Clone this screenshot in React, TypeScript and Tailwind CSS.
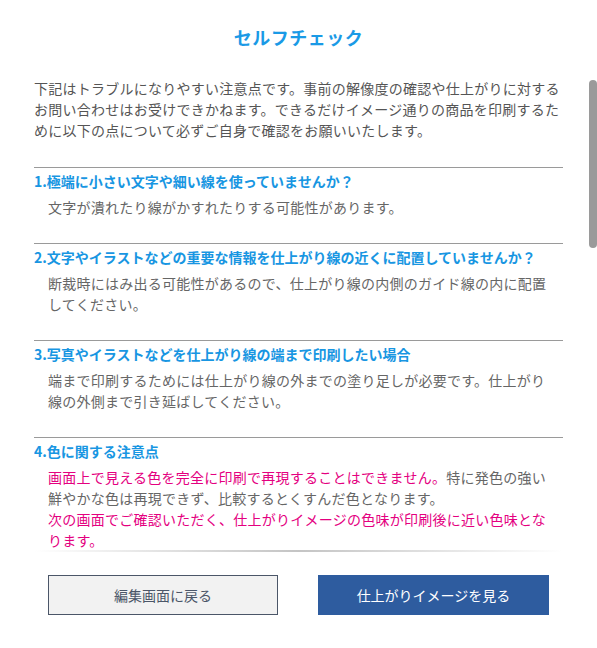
import React from "react";

const sections = [
  {
    title: "1.極端に小さい文字や細い線を使っていませんか？",
    body: [{ text: "文字が潰れたり線がかすれたりする可能性があります。" }],
  },
  {
    title: "2.文字やイラストなどの重要な情報を仕上がり線の近くに配置していませんか？",
    body: [{ text: "断裁時にはみ出る可能性があるので、仕上がり線の内側のガイド線の内に配置してください。" }],
  },
  {
    title: "3.写真やイラストなどを仕上がり線の端まで印刷したい場合",
    body: [{ text: "端まで印刷するためには仕上がり線の外までの塗り足しが必要です。仕上がり線の外側まで引き延ばしてください。" }],
  },
  {
    title: "4.色に関する注意点",
    body: [
      { text: "画面上で見える色を完全に印刷で再現することはできません。", pink: true },
      { text: "特に発色の強い鮮やかな色は再現できず、比較するとくすんだ色となります。" },
      { br: true, text: "" },
      { text: "次の画面でご確認いただく、仕上がりイメージの色味が印刷後に近い色味となります。", pink: true },
    ],
  },
];

export default function App() {
  return (
    <div
      className="relative w-[597px] h-[648px] bg-white overflow-hidden"
      style={{ fontFamily: '"Noto Sans CJK JP", "Noto Sans", sans-serif' }}
    >
      {/* scrollbar thumb */}
      <div className="absolute right-0 top-[80px] w-[8px] h-[168px] rounded-[4px] bg-[#9a9a9a]" />

      <div className="px-[34px] pt-[24px]">
        <h1 className="text-center text-[18px] leading-[27px] font-bold text-[#1a9ae6] tracking-[0.5px]">セルフチェック</h1>

        <p className="mt-[27px] text-[14px] leading-[21px] text-[#555] tracking-[0.25px]">
          下記はトラブルになりやすい注意点です。事前の解像度の確認や仕上がりに対するお問い合わせはお受けできかねます。できるだけイメージ通りの商品を印刷するために以下の点について必ずご自身で確認をお願いいたします。
        </p>

        <div className="mt-[26px] h-[383px] overflow-hidden">
          {sections.map((s) => (
            <div key={s.title} className="border-t border-[#9a9a9a] pt-[3px] pb-[25px]">
              <h2 className="text-[14px] leading-[20px] font-bold text-[#1896e2]">{s.title}</h2>
              <p className="mt-[6px] pl-[14px] pr-[10px] text-[14px] leading-[21px] text-[#666] tracking-[0.25px]">
                {s.body.map((b, i) =>
                  b.br ? (
                    <br key={i} />
                  ) : (
                    <span key={i} className={b.pink ? "text-[#e4007f]" : ""}>
                      {b.text}
                    </span>
                  )
                )}
              </p>
            </div>
          ))}
        </div>
        <div className="h-[2px] bg-gradient-to-r from-transparent via-[#c4c4c4] to-transparent" />
      </div>

      <div className="mt-[23px] flex justify-center gap-[40px]">
        <button className="w-[230px] h-[40px] bg-[#f2f2f2] border border-[#4b5668] text-[14px] text-[#4b5668]">
          編集画面に戻る
        </button>
        <button className="w-[231px] h-[40px] bg-[#2e5c9f] text-[14px] text-white">
          仕上がりイメージを見る
        </button>
      </div>
    </div>
  );
}
